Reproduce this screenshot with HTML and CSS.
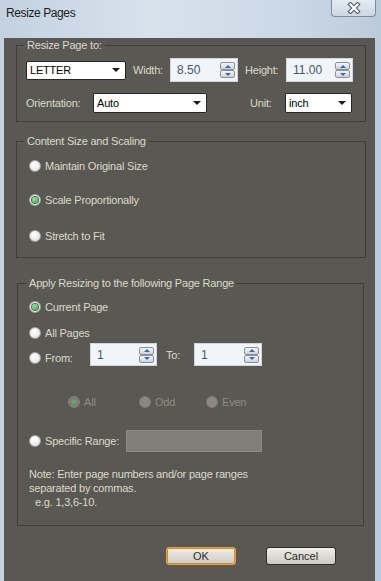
FILE: index.html
```html
<!DOCTYPE html>
<html lang="en">
<head>
    <meta charset="UTF-8">
    <meta name="viewport" content="width=device-width, initial-scale=1.0">
    <title>Resize Pages</title>
    <link rel="stylesheet" href="styles.css">
</head>
<body>
<div class="window">
    <div class="titlebar">
        <span class="title">Resize Pages</span>
        <div class="close">
            <svg width="14" height="12" viewBox="0 0 14 12">
                <path d="M3.5 2.5 L10.5 9.5 M10.5 2.5 L3.5 9.5" stroke="#555f6b" stroke-width="4.4" stroke-linecap="square" fill="none"/>
                <path d="M3.5 2.5 L10.5 9.5 M10.5 2.5 L3.5 9.5" stroke="#ffffff" stroke-width="2.2" stroke-linecap="square" fill="none"/>
            </svg>
        </div>
    </div>

    <div class="content">
        <!-- page size -->
        <fieldset class="group g-size">
            <legend>Resize Page to:</legend>
            <div class="inner">
                <div class="row row-dims">
                    <div class="select sel-paper"><span>LETTER</span><i class="caret"></i></div>
                    <span class="lbl lbl-width">Width:</span>
                    <div class="spin spin-width"><span>8.50</span><div class="spin-btns"><b class="up"></b><b class="down"></b></div></div>
                    <span class="lbl lbl-height">Height:</span>
                    <div class="spin spin-height"><span>11.00</span><div class="spin-btns"><b class="up"></b><b class="down"></b></div></div>
                </div>
                <div class="row row-orient">
                    <span class="lbl lbl-orient">Orientation:</span>
                    <div class="select sel-orient"><span>Auto</span><i class="caret"></i></div>
                    <span class="lbl lbl-unit">Unit:</span>
                    <div class="select sel-unit"><span>inch</span><i class="caret"></i></div>
                </div>
            </div>
        </fieldset>

        <!-- scaling -->
        <fieldset class="group g-scale">
            <legend>Content Size and Scaling</legend>
            <div class="inner">
                <div class="opt opt-1"><i class="radio"></i><span>Maintain Original Size</span></div>
                <div class="opt opt-2"><i class="radio on"></i><span>Scale Proportionally</span></div>
                <div class="opt opt-3"><i class="radio"></i><span>Stretch to Fit</span></div>
            </div>
        </fieldset>

        <!-- page range -->
        <fieldset class="group g-range">
            <legend>Apply Resizing to the following Page Range</legend>
            <div class="inner">
                <div class="opt r-current"><i class="radio on"></i><span>Current Page</span></div>
                <div class="opt r-all"><i class="radio"></i><span>All Pages</span></div>
                <div class="row row-from">
                    <div class="opt opt-from"><i class="radio"></i><span class="lbl lbl-from">From:</span></div>
                    <div class="spin spin-from"><span>1</span><div class="spin-btns"><b class="up"></b><b class="down"></b></div></div>
                    <span class="lbl lbl-to">To:</span>
                    <div class="spin spin-to"><span>1</span><div class="spin-btns"><b class="up"></b><b class="down"></b></div></div>
                </div>
                <div class="row row-subset">
                    <div class="opt off sub-all"><i class="radio on"></i><span>All</span></div>
                    <div class="opt off sub-odd"><i class="radio"></i><span>Odd</span></div>
                    <div class="opt off sub-even"><i class="radio"></i><span>Even</span></div>
                </div>
                <div class="row row-specific">
                    <div class="opt"><i class="radio"></i><span class="lbl lbl-specific">Specific Range:</span></div>
                    <div class="field-off"></div>
                </div>
                <p class="note">Note: Enter page numbers and/or page ranges<br>separated by commas.<br><span class="eg">e.g. 1,3,6-10.</span></p>
            </div>
        </fieldset>

        <div class="actions">
            <button class="btn btn-ok">OK</button>
            <button class="btn btn-cancel">Cancel</button>
        </div>
    </div>
</div>
</body>
</html>
```

FILE: styles.css
```css
* {
    box-sizing: border-box;
}
body {
    margin: 0;
    font-family: "Liberation Sans", Arial, sans-serif;
    font-size: 11px;
    letter-spacing: -0.2px;
}
.window {
    width: 381px;
    height: 581px;
    background: linear-gradient(to right, #c3d1e0, #d8e2ed 40%, #cbd8e6 75%, #bccbdb);
}
.titlebar {
    height: 27px;
    display: flex;
    align-items: flex-start;
}
.title {
    padding: 6px 0 0 6px;
    font-size: 12px;
    line-height: 15px;
    color: #1b1b1b;
    letter-spacing: -0.4px;
}
.close {
    margin-left: auto;
    margin-right: 5px;
    width: 45px;
    height: 17px;
    border: 1px solid #7f8c9c;
    border-top: none;
    border-radius: 0 0 4px 4px;
    background: linear-gradient(#e4ebf2, #ccd7e3);
    display: flex;
    align-items: center;
    justify-content: center;
}
.content {
    margin: 0 6px 0 4px;
    height: 549px;
    padding: 0 9px 0 12px;
    background: #5a5852;
    color: #dcd8cc;
}

/* group boxes */
.group {
    margin: 0;
    padding: 0;
    min-width: 0;
    border: 1px solid #403e3a;
}
.group legend {
    margin-left: 7px;
    padding: 0 3px;
    line-height: 14px;
}
.g-size {
    margin-top: 11px;
}
.g-size .inner {
    padding: 6px 0 8px 9px;
}
.g-scale {
    margin-top: 12px;
}
.g-scale .inner {
    padding: 10px 0 13px 12px;
}
.g-range {
    margin: 18px 2px 0 1px;
}
.g-range legend {
    margin-left: 8px;
}
.g-range .inner {
    padding: 9px 0 16px 11px;
}

.row {
    display: flex;
    align-items: center;
}
.lbl {
    flex: none;
}

/* size rows */
.row-dims {
    height: 24px;
}
.row-orient {
    height: 20px;
    margin-top: 11px;
}
.lbl-width {
    width: 37px;
    margin-left: 7px;
}
.lbl-height {
    width: 41px;
    margin-left: 7px;
}
.lbl-orient {
    width: 67px;
}
.lbl-unit {
    width: 35px;
    margin-left: 43px;
}

/* drop downs */
.select {
    height: 20px;
    display: flex;
    align-items: center;
    padding-left: 3px;
    background: #ffffff;
    border: 1px solid #262626;
    border-radius: 2px;
    color: #000000;
}
.caret {
    margin-left: auto;
    margin-right: 5px;
    width: 0;
    height: 0;
    border-left: 4px solid transparent;
    border-right: 4px solid transparent;
    border-top: 4px solid #1a1a1a;
}
.sel-paper {
    width: 100px;
    height: 19px;
}
.sel-orient {
    width: 114px;
}
.sel-unit {
    width: 67px;
}

/* spin boxes */
.spin {
    height: 24px;
    display: flex;
    align-items: center;
    padding-left: 6px;
    background: #f1f5fa;
    border: 1px solid #d3d7dd;
    color: #48546e;
    font-size: 12px;
    letter-spacing: 0;
}
.spin-width {
    width: 68px;
}
.spin-height {
    width: 67px;
}
.spin-btns {
    margin-left: auto;
    margin-right: 2px;
    display: flex;
    flex-direction: column;
}
.spin-btns b {
    width: 15px;
    height: 8px;
    border: 1px solid #8d9197;
    border-radius: 2px;
    background: linear-gradient(#f6f6f6, #cfd2d6);
    display: flex;
    align-items: center;
    justify-content: center;
}
.spin-btns b::after {
    content: "";
    border-left: 3px solid transparent;
    border-right: 3px solid transparent;
}
.spin-btns .up::after {
    border-bottom: 3px solid #2f6cc6;
}
.spin-btns .down::after {
    border-top: 3px solid #2f6cc6;
}

/* radio options */
.opt {
    display: flex;
    align-items: center;
    height: 16px;
}
.radio {
    flex: none;
    width: 12px;
    height: 12px;
    margin-right: 4px;
    border-radius: 50%;
    border: 1px solid #a3a3a3;
    background: radial-gradient(circle at 40% 35%, #ffffff, #ececec 60%, #cdcdcd);
    display: flex;
    align-items: center;
    justify-content: center;
}
.radio.on::after {
    content: "";
    width: 6px;
    height: 6px;
    border-radius: 50%;
    background: radial-gradient(circle at 40% 35%, #8fe69a, #2a9a44);
    box-shadow: 0 0 0 1px #5d655e;
}
.opt-2 {
    margin-top: 18px;
}
.opt-3 {
    margin-top: 20px;
}
.r-all {
    margin-top: 10px;
}
.row-from {
    height: 23px;
    margin-top: 2px;
}
.opt-from {
    margin-top: 6px;
}
.lbl-from {
    width: 45px;
}
.spin-from {
    width: 67px;
    height: 23px;
}
.lbl-to {
    width: 28px;
    margin-left: 9px;
}
.spin-to {
    width: 68px;
    height: 23px;
}
.row-subset {
    margin-top: 28px;
    padding-left: 39px;
}
.opt.off {
    color: #8f8c84;
}
.opt.off .radio {
    border-color: #7c7972;
    background: #8b8881;
}
.opt.off .radio.on::after {
    background: #6f9a72;
    box-shadow: 0 0 0 1px #76746e;
}
.sub-all {
    width: 71px;
}
.sub-odd {
    width: 67px;
}
.row-specific {
    height: 22px;
    margin-top: 20px;
}
.lbl-specific {
    width: 81px;
}
.field-off {
    width: 136px;
    height: 22px;
    background: #807e78;
    border: 1px solid #8b8983;
}
.note {
    margin: 15px 0 0;
    line-height: 14px;
}
.eg {
    padding-left: 6px;
}

/* buttons */
.actions {
    display: flex;
    margin-top: 21px;
    padding-left: 150px;
}
.btn {
    width: 70px;
    height: 18px;
    padding: 0;
    font-family: inherit;
    font-size: 11px;
    color: #2c2c2c;
    background: linear-gradient(#efede8, #cdcac2);
    border: 1px solid #2f2d2a;
    border-radius: 3px;
}
.btn-ok {
    border-color: #f2a033;
    box-shadow: 0 0 0 1px #c98a3a inset;
}
.btn-cancel {
    margin-left: 30px;
}
```
